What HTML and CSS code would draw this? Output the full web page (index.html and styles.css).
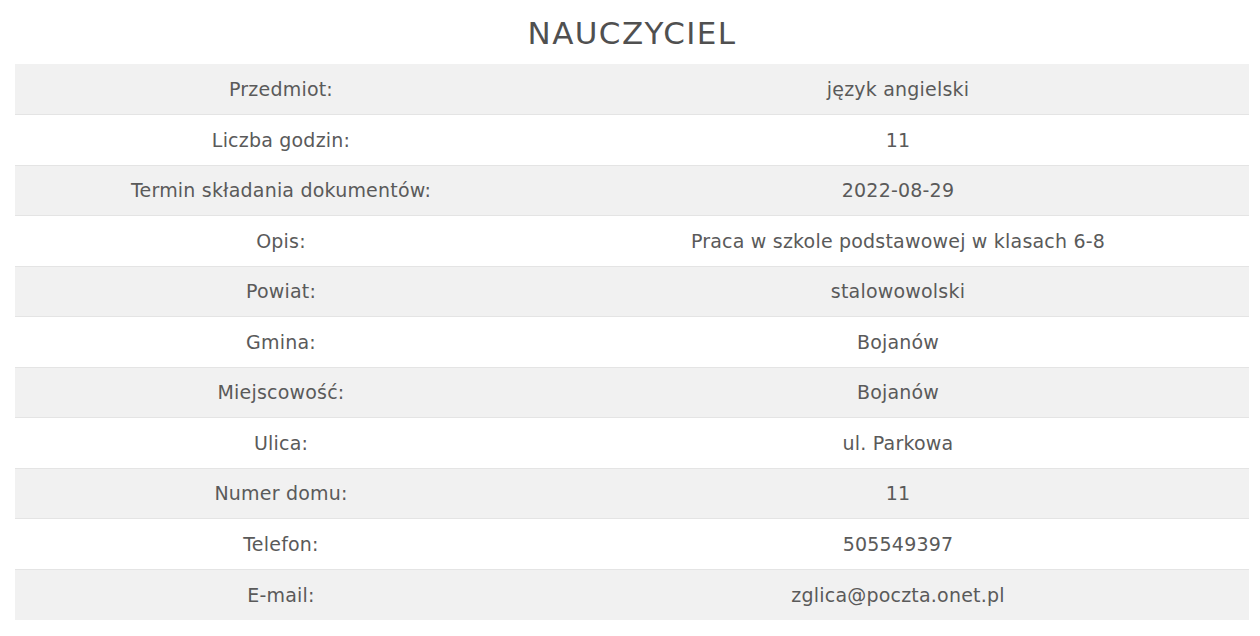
FILE: index.html
```html
<!DOCTYPE html>
<html lang="pl">
<head>
<meta charset="utf-8">
<title>Nauczyciel</title>
<link rel="stylesheet" href="styles.css">
</head>
<body>
<div class="page">
  <h1 class="title">NAUCZYCIEL</h1>
  <table class="info">
    <tbody>
      <tr class="odd"><td class="label">Przedmiot:</td><td class="value">język angielski</td></tr>
      <tr><td class="label">Liczba godzin:</td><td class="value">11</td></tr>
      <tr class="odd"><td class="label">Termin składania dokumentów:</td><td class="value">2022-08-29</td></tr>
      <tr><td class="label">Opis:</td><td class="value">Praca w szkole podstawowej w klasach 6-8</td></tr>
      <tr class="odd"><td class="label">Powiat:</td><td class="value">stalowowolski</td></tr>
      <tr><td class="label">Gmina:</td><td class="value">Bojanów</td></tr>
      <tr class="odd"><td class="label">Miejscowość:</td><td class="value">Bojanów</td></tr>
      <tr><td class="label">Ulica:</td><td class="value">ul. Parkowa</td></tr>
      <tr class="odd"><td class="label">Numer domu:</td><td class="value">11</td></tr>
      <tr><td class="label">Telefon:</td><td class="value">505549397</td></tr>
      <tr class="odd"><td class="label">E-mail:</td><td class="value">zglica@poczta.onet.pl</td></tr>
    </tbody>
  </table>
</div>
</body>
</html>
```

FILE: styles.css
```css
html, body {
  margin: 0;
  padding: 0;
  background: #ffffff;
}
body {
  font-family: "DejaVu Sans", "Noto Sans", sans-serif;
  color: #555555;
}
.page {
  padding: 0 11px 0 15px;
}
.title {
  margin: 0;
  height: 64px;
  line-height: 66px;
  text-align: center;
  font-size: 31px;
  font-weight: normal;
  color: #505050;
  letter-spacing: 1.4px;
}
.info {
  width: 100%;
  border-collapse: collapse;
  table-layout: fixed;
}
.info tr {
  height: 50.5px;
  border-bottom: 1px solid #e4e4e4;
}
.info tr:last-child {
  border-bottom: none;
}
.info tr.odd {
  background: #f1f1f1;
}
.info td {
  padding: 0;
  text-align: center;
  vertical-align: middle;
  font-size: 19px;
  letter-spacing: 0.2px;
  color: #5a5a5a;
}
.info td.label {
  width: 532px;
}
```
